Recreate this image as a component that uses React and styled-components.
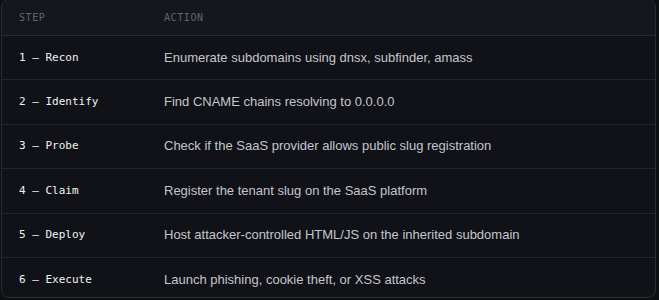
import React from "react";
import styled, { createGlobalStyle } from "styled-components";

const Global = createGlobalStyle`
  html, body { margin: 0; padding: 0; background: #0e0f13; }
  * { box-sizing: border-box; }
`;

const Frame = styled.div`
  margin: -1px 0 0 1px;
  width: 655px;
  height: 299px;
  border: 1px solid #2b2c33;
  border-radius: 8px;
  overflow: hidden;
  background: #111217;
`;

const Grid = styled.div`
  display: grid;
  grid-template-columns: 162px 1fr;
`;

const HeadCell = styled.div`
  background: #16171d;
  padding: ${(p) => (p.$first ? "10px 0 10px 17px" : "10px 0")};
  line-height: 15px;
  font-family: "DejaVu Sans Mono", monospace;
  font-size: 10px;
  letter-spacing: 0.06em;
  color: #5f6471;
  border-bottom: 1px solid #2b2c33;
`;

const Cell = styled.div`
  padding: ${(p) => (p.$first ? "13.7px 0 13.7px 17px" : "13.7px 0")};
  line-height: 16px;
  border-bottom: ${(p) => (p.$last ? "none" : "1px solid #24252b")};
  white-space: nowrap;
`;

const Step = styled(Cell)`
  font-family: "DejaVu Sans Mono", monospace;
  font-size: 11px;
  color: #f0f2f6;
`;

const Action = styled(Cell)`
  font-family: "Liberation Sans", Arial, sans-serif;
  font-size: 13px;
  color: #c3c6ce;
`;

const rows = [
  ["1 — Recon", "Enumerate subdomains using dnsx, subfinder, amass"],
  ["2 — Identify", "Find CNAME chains resolving to 0.0.0.0"],
  ["3 — Probe", "Check if the SaaS provider allows public slug registration"],
  ["4 — Claim", "Register the tenant slug on the SaaS platform"],
  ["5 — Deploy", "Host attacker-controlled HTML/JS on the inherited subdomain"],
  ["6 — Execute", "Launch phishing, cookie theft, or XSS attacks"],
];

export default function App() {
  return (
    <>
      <Global />
      <Frame>
        <Grid>
          <HeadCell $first>STEP</HeadCell>
          <HeadCell>ACTION</HeadCell>
          {rows.map(([s, a], i) => (
            <React.Fragment key={s}>
              <Step $first $last={i === rows.length - 1}>{s}</Step>
              <Action $last={i === rows.length - 1}>{a}</Action>
            </React.Fragment>
          ))}
        </Grid>
      </Frame>
    </>
  );
}
